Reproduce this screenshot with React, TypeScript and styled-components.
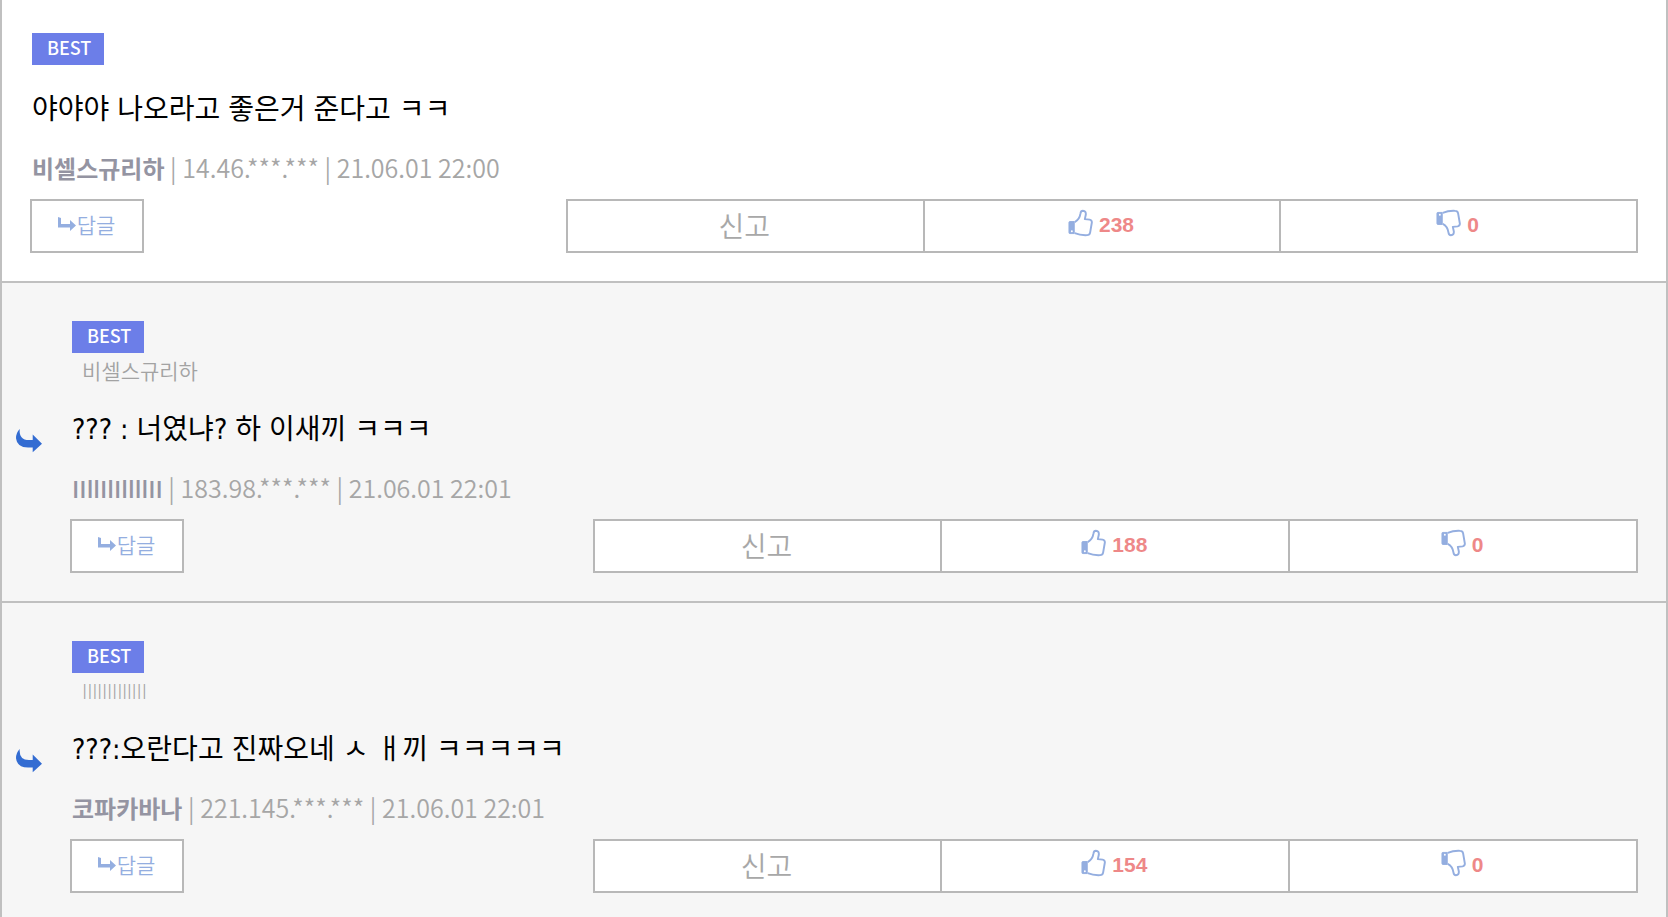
import React from "react";
import styled, { createGlobalStyle, css } from "styled-components";

const GlobalStyle = createGlobalStyle`
  * { box-sizing: border-box; }
  body {
    margin: 0;
    background: #f6f6f6;
    font-family: "Noto Sans CJK KR", "Noto Sans", sans-serif;
  }
`;

const List = styled.ul`
  list-style: none;
  margin: 0;
  padding: 0;
  border: solid #c0c0c0;
  border-width: 0 2px;
`;

const Item = styled.li<{ $reply: boolean }>`
  display: flex;
  align-items: center;
  padding: 33px 28px 28px;
  border-bottom: 2px solid #c0c0c0;
  background: #fff;
  ${({ $reply }) =>
    $reply &&
    css`
      padding: 38px 28px 28px 14px;
      background: #f6f6f6;
    `}
`;

const ThreadMark = styled.svg`
  flex: none;
  width: 26px;
  height: 26px;
  margin: 0 28px 12px 0;
`;

const Body = styled.div`
  flex: 1;
  min-width: 0;
`;

const Texts = styled.div`
  padding-left: 2px;
`;

const Badge = styled.span`
  display: block;
  width: 72px;
  height: 32px;
  padding-left: 15px;
  background: #6c7ee8;
  color: #fff;
  font-size: 18px;
  font-weight: 500;
  line-height: 29px;
`;

const Mention = styled.div`
  padding-left: 10px;
  color: #a3a3a3;
  font-family: "Open Sans", "Noto Sans CJK KR", sans-serif;
  font-size: 21px;
  font-weight: 350;
  line-height: 36px;
`;

const Message = styled.p<{ $reply: boolean }>`
  margin: ${({ $reply }) => ($reply ? 23 : 27)}px 0 0;
  color: #000;
  font-family: "DejaVu Sans Condensed", "Noto Sans CJK KR", sans-serif;
  font-size: 28px;
  line-height: 36px;
`;

const Meta = styled.div`
  margin: 21px 0 0;
  color: #a6a6a6;
  font-size: 25px;
  font-weight: 350;
  line-height: 36px;
`;

const Author = styled.strong`
  color: #9494a2;
  font-family: "Open Sans", "Noto Sans CJK KR", sans-serif;
  font-size: 24px;
  font-weight: 600;
  line-height: 1;
`;

const Actions = styled.div`
  display: flex;
  justify-content: space-between;
  margin-top: 14px;
`;

const Button = styled.button`
  display: flex;
  align-items: center;
  justify-content: center;
  height: 54px;
  padding: 0 2px 2px 0;
  border: 2px solid #b8b8b8;
  border-radius: 0;
  background: #fff;
  font-family: inherit;
  cursor: pointer;
`;

const ReplyButton = styled(Button)`
  width: 114px;
  padding-bottom: 4px;
  color: #94aee0;
  font-size: 21px;
  font-weight: 350;
`;

const ReplyArrow = styled.svg`
  width: 20px;
  height: 16px;
`;

const Votes = styled.div`
  display: grid;
  grid-template-columns: repeat(3, 1fr);
  width: calc(100% * 2 / 3);
  border-left: 2px solid #b8b8b8;
`;

const VoteButton = styled(Button)`
  gap: 6px;
  border-left: 0;
  color: #a8a8a8;
  font-size: 28px;
  font-weight: 350;
`;

const Count = styled.span`
  color: #ee8888;
  font-family: "Liberation Sans", Arial, sans-serif;
  font-size: 21px;
  font-weight: 700;
`;

const ThumbSvg = styled.svg<{ $down?: boolean }>`
  width: 25px;
  height: 28px;
  margin-bottom: 4px;
  ${({ $down }) => $down && "transform: scaleY(-1);"}
`;

function Thumb({ down }: { down?: boolean }) {
  return (
    <ThumbSvg $down={down} viewBox="0 0 26 28" aria-hidden="true">
      <path
        d="M2 12.5 H6.5 V25 H2 Q1 25 1 24 V13.5 Q1 12.5 2 12.5 Z"
        fill="#94aee0"
        stroke="#94aee0"
      />
      <circle cx="4" cy="22.5" r="1" fill="#fff" />
      <path
        d="M7 13 Q12 10.500 13 4 Q13.300 1.300 15.500 1.300 Q19 1.500 18.500 5.500 L17.500 10 L22.500 10.500 Q25 11 24.800 13.500 L23 24 Q22.500 26.600 20 26.600 Q13 27 7 24.500"
        fill="none"
        stroke="#94aee0"
        strokeWidth="2"
        strokeLinejoin="round"
      />
    </ThumbSvg>
  );
}

interface Comment {
  author: string;
  ip: string;
  date: string;
  text: string;
  up: number;
  down: number;
  to?: string;
}

const comments: Comment[] = [
  {
    author: "비셀스규리하",
    ip: "14.46.***.***",
    date: "21.06.01 22:00",
    text: "야야야 나오라고 좋은거 준다고 ㅋㅋ",
    up: 238,
    down: 0,
  },
  {
    author: "IIllIlIllllII",
    ip: "183.98.***.***",
    date: "21.06.01 22:01",
    text: "??? : 너였냐? 하 이새끼 ㅋㅋㅋ",
    up: 188,
    down: 0,
    to: "비셀스규리하",
  },
  {
    author: "코파카바나",
    ip: "221.145.***.***",
    date: "21.06.01 22:01",
    text: "???:오란다고 진짜오네 ㅅ ㅐ끼 ㅋㅋㅋㅋㅋ",
    up: 154,
    down: 0,
    to: "IIllIlIllllII",
  },
];

function CommentItem({ comment }: { comment: Comment }) {
  const isReply = !!comment.to;
  return (
    <Item $reply={isReply}>
      {isReply && (
        <ThreadMark viewBox="0 0 28 26" aria-hidden="true">
          <path
            d="M4 0 Q3 12 14 12 H18 V6 L28 16 L18 25 V20 H13 Q1 20 0 10 Q0 4 4 0 Z"
            fill="#336cd2"
          />
        </ThreadMark>
      )}
      <Body>
        <Texts>
          <Badge>BEST</Badge>
          {isReply && <Mention>{comment.to}</Mention>}
          <Message $reply={isReply}>{comment.text}</Message>
          <Meta>
            <Author>{comment.author}</Author> | {comment.ip} | {comment.date}
          </Meta>
        </Texts>
        <Actions>
          <ReplyButton type="button">
            <ReplyArrow viewBox="0 0 20 16" aria-hidden="true">
              <path d="M1 1 L4 2 V8 H13 V4 L19 9.500 L13 15 V11.500 H1 Z" fill="#94aee0" />
            </ReplyArrow>
            답글
          </ReplyButton>
          <Votes>
            <VoteButton type="button">신고</VoteButton>
            <VoteButton type="button" aria-label={`추천 ${comment.up}`}>
              <Thumb />
              <Count>{comment.up}</Count>
            </VoteButton>
            <VoteButton type="button" aria-label={`비추천 ${comment.down}`}>
              <Thumb down />
              <Count>{comment.down}</Count>
            </VoteButton>
          </Votes>
        </Actions>
      </Body>
    </Item>
  );
}

export default function App() {
  return (
    <>
      <GlobalStyle />
      <List>
        {comments.map((c) => (
          <CommentItem key={c.author} comment={c} />
        ))}
      </List>
    </>
  );
}
